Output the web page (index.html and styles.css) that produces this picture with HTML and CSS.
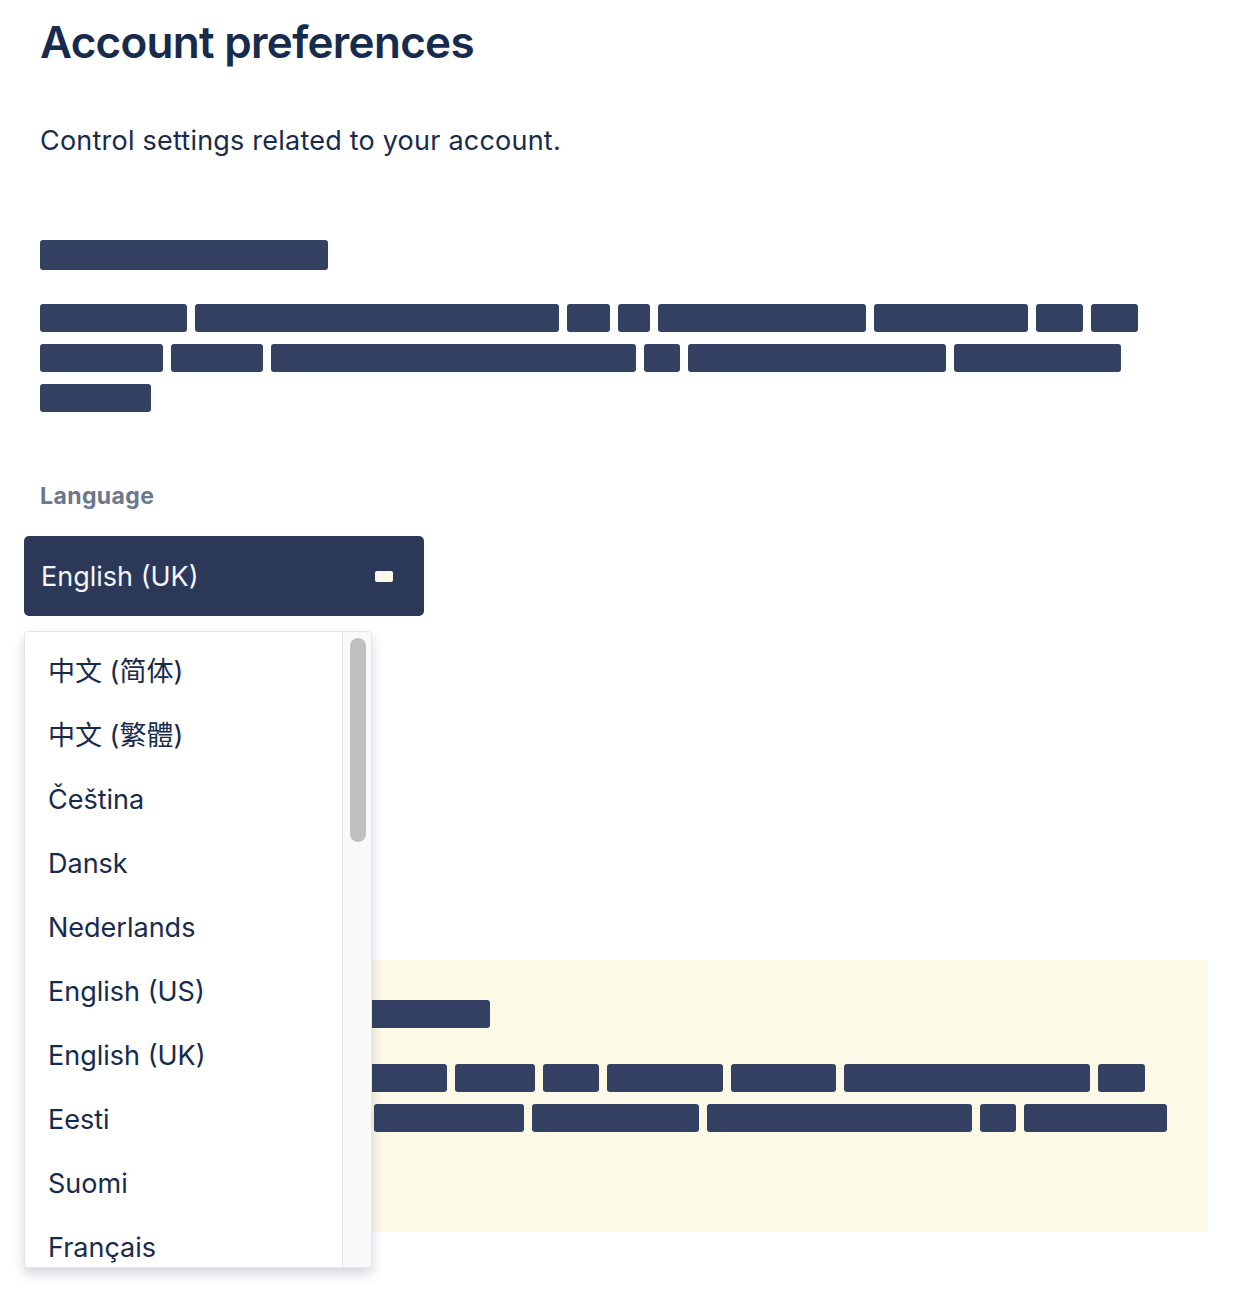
FILE: index.html
```html
<!DOCTYPE html>
<html lang="en">
<head>
<meta charset="UTF-8">
<meta name="viewport" content="width=device-width, initial-scale=1.0">
<title>Account preferences</title>
<link rel="stylesheet" href="styles.css">
</head>
<body>

<div class="page">
    <h1 class="titulo">Account preferences</h1>
    <p class="subtitulo">Control settings related to your account.</p>

    <div class="seccion">
        <div class="barra barra-titulo" style="width: 288px"></div>
        <div class="lineas">
            <div class="fila">
                <span class="barra" style="width: 147px"></span>
                <span class="barra" style="width: 364px"></span>
                <span class="barra" style="width: 43px"></span>
                <span class="barra" style="width: 32px"></span>
                <span class="barra" style="width: 208px"></span>
                <span class="barra" style="width: 154px"></span>
                <span class="barra" style="width: 47px"></span>
                <span class="barra" style="width: 47px"></span>
            </div>
            <div class="fila">
                <span class="barra" style="width: 123px"></span>
                <span class="barra" style="width: 92px"></span>
                <span class="barra" style="width: 365px"></span>
                <span class="barra" style="width: 36px"></span>
                <span class="barra" style="width: 258px"></span>
                <span class="barra" style="width: 167px"></span>
            </div>
            <div class="fila">
                <span class="barra" style="width: 111px"></span>
            </div>
        </div>
    </div>

    <label class="etiqueta">Language</label>
    <div class="selector">
        <div class="selector-valor">
            <span>English (UK)</span>
            <span class="selector-icono"></span>
        </div>
        <div class="menu">
            <ul class="menu-lista">
                <li>中文 (简体)</li>
                <li>中文 (繁體)</li>
                <li>Čeština</li>
                <li>Dansk</li>
                <li>Nederlands</li>
                <li>English (US)</li>
                <li>English (UK)</li>
                <li>Eesti</li>
                <li>Suomi</li>
                <li>Français</li>
            </ul>
            <div class="menu-barra">
                <div class="menu-pulgar"></div>
            </div>
        </div>
    </div>

    <div class="aviso">
        <div class="barra barra-titulo" style="width: 426px"></div>
        <div class="lineas">
            <div class="fila">
                <span class="barra" style="width: 118px"></span>
                <span class="barra" style="width: 170px"></span>
                <span class="barra" style="width: 79px"></span>
                <span class="barra" style="width: 80px"></span>
                <span class="barra" style="width: 56px"></span>
                <span class="barra" style="width: 116px"></span>
                <span class="barra" style="width: 105px"></span>
                <span class="barra" style="width: 246px"></span>
                <span class="barra" style="width: 47px"></span>
            </div>
            <div class="fila">
                <span class="barra" style="width: 136px"></span>
                <span class="barra" style="width: 158px"></span>
                <span class="barra" style="width: 150px"></span>
                <span class="barra" style="width: 167px"></span>
                <span class="barra" style="width: 265px"></span>
                <span class="barra" style="width: 36px"></span>
                <span class="barra" style="width: 143px"></span>
            </div>
        </div>
    </div>
</div>

</body>
</html>
```

FILE: styles.css
```css
body, html {
    margin: 0;
    padding: 0;
    font-family: Inter, "Noto Sans CJK SC", sans-serif;
    background-color: #ffffff;
    color: #172b4d;
}
.page {
    padding: 0 26px 0 40px;
    min-height: 1300px;
    box-sizing: border-box;
}
.titulo {
    margin: 0;
    padding-top: 14px;
    font-size: 44px;
    font-weight: 600;
    line-height: 56px;
    letter-spacing: -0.7px;
}
.subtitulo {
    margin: 55px 0 0 0;
    font-size: 27px;
    line-height: 32px;
    font-weight: 400;
    letter-spacing: 0.22px;
}

/* barras de texto ocultas */
.barra {
    display: block;
    height: 28px;
    background-color: #344162;
    border-radius: 3px;
}
.barra-titulo {
    height: 30px;
}
.seccion {
    margin-top: 83px;
}
.lineas {
    display: flex;
    flex-direction: column;
    gap: 12px;
    margin-top: 34px;
}
.fila {
    display: flex;
    gap: 8px;
}

.etiqueta {
    display: block;
    margin-top: 70px;
    font-size: 23px;
    line-height: 28px;
    font-weight: 700;
    color: #6b778c;
    letter-spacing: 0.4px;
}

.selector {
    position: relative;
    margin: 26px 0 0 -16px;
    width: 400px;
}
.selector-valor {
    display: flex;
    align-items: center;
    justify-content: space-between;
    height: 80px;
    padding: 0 31px 0 17px;
    background-color: #2b3858;
    border-radius: 5px;
    color: #f4f5f7;
    font-size: 27px;
}
.selector-icono {
    width: 18px;
    height: 11px;
    background-color: #fbf7e9;
    border-radius: 2px;
}

.menu {
    position: absolute;
    top: 95px;
    left: 0;
    display: flex;
    width: 348px;
    height: 637px;
    box-sizing: border-box;
    background: #fff;
    border: 1px solid #e4e6ea;
    border-radius: 4px;
    box-shadow: 0 6px 12px rgba(9, 30, 66, 0.18);
    overflow: hidden;
    z-index: 2;
}
.menu-lista {
    flex: 1;
    margin: 0;
    padding: 8px 0;
    list-style: none;
    overflow: hidden;
}
.menu-lista li {
    height: 64px;
    line-height: 64px;
    padding-left: 23px;
    font-size: 27px;
    white-space: nowrap;
}
.menu-barra {
    width: 29px;
    box-sizing: border-box;
    padding: 6px 5px 0 7px;
    background: #fafafa;
    border-left: 1px solid #e8e8e8;
}
.menu-pulgar {
    height: 204px;
    background-color: #c1c1c1;
    border-radius: 8px;
}

.aviso {
    margin: 344px 0 0 -16px;
    padding: 40px 40px 100px 40px;
    background-color: #fcf9e7;
    border-radius: 5px;
}
.aviso .lineas {
    margin-top: 36px;
    gap: 12px;
}
.aviso .barra {
    height: 28px;
}
.aviso .barra-titulo {
    height: 28px;
}
```
